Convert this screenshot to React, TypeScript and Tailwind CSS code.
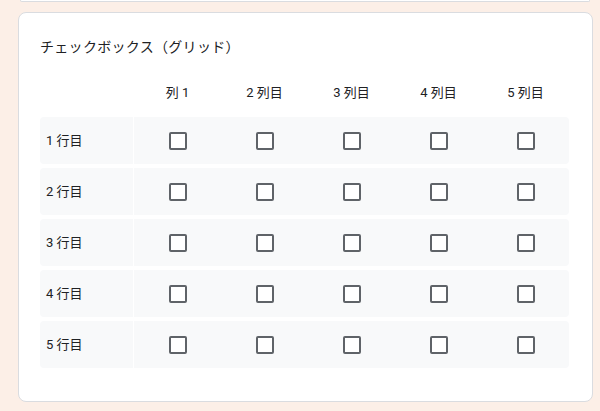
const columns = ['列 1', '2 列目', '3 列目', '4 列目', '5 列目'];
const rows = ['1 行目', '2 行目', '3 行目', '4 行目', '5 行目'];

function Checkbox() {
  return (
    <div className="w-[18px] h-[18px] rounded-[2px] border-2 border-[#5f6368] bg-white" />
  );
}

export default function App() {
  return (
    <div
      className="w-[600px] h-[411px] overflow-hidden bg-[#fcefe7] pl-[18px] text-[#202124]"
      style={{ fontFamily: 'Roboto, "Noto Sans CJK JP", sans-serif' }}
    >
      {/* bottom edge of the previous card */}
      <div className="ml-[2px] w-[570px] h-[2px] rounded-b-lg border-b border-x border-[#dadce0] bg-white" />

      <div className="mt-[10px] w-[575px] h-[390px] rounded-lg border border-[#dadce0] bg-white pt-[24px] pl-[21px] pr-[23px]">
        <h2 className="text-[14px] leading-[20px] tracking-[0.3px]">チェックボックス（グリッド）</h2>

        <div className="mt-[24px] grid grid-cols-[94px_repeat(5,1fr)] h-[24px] items-center text-[13px]">
          <div />
          {columns.map((c) => (
            <div key={c} className="text-center">{c}</div>
          ))}
        </div>

        <div className="mt-[12px] flex flex-col gap-[4px]">
          {rows.map((r) => (
            <div
              key={r}
              className="grid grid-cols-[94px_repeat(5,1fr)] h-[47px] items-center rounded bg-[#f8f9fa]"
            >
              <div className="h-full flex items-center pl-[6px] text-[13px] border-r border-white">{r}</div>
              {columns.map((c) => (
                <div key={c} className="flex justify-center">
                  <Checkbox />
                </div>
              ))}
            </div>
          ))}
        </div>
      </div>
    </div>
  );
}
